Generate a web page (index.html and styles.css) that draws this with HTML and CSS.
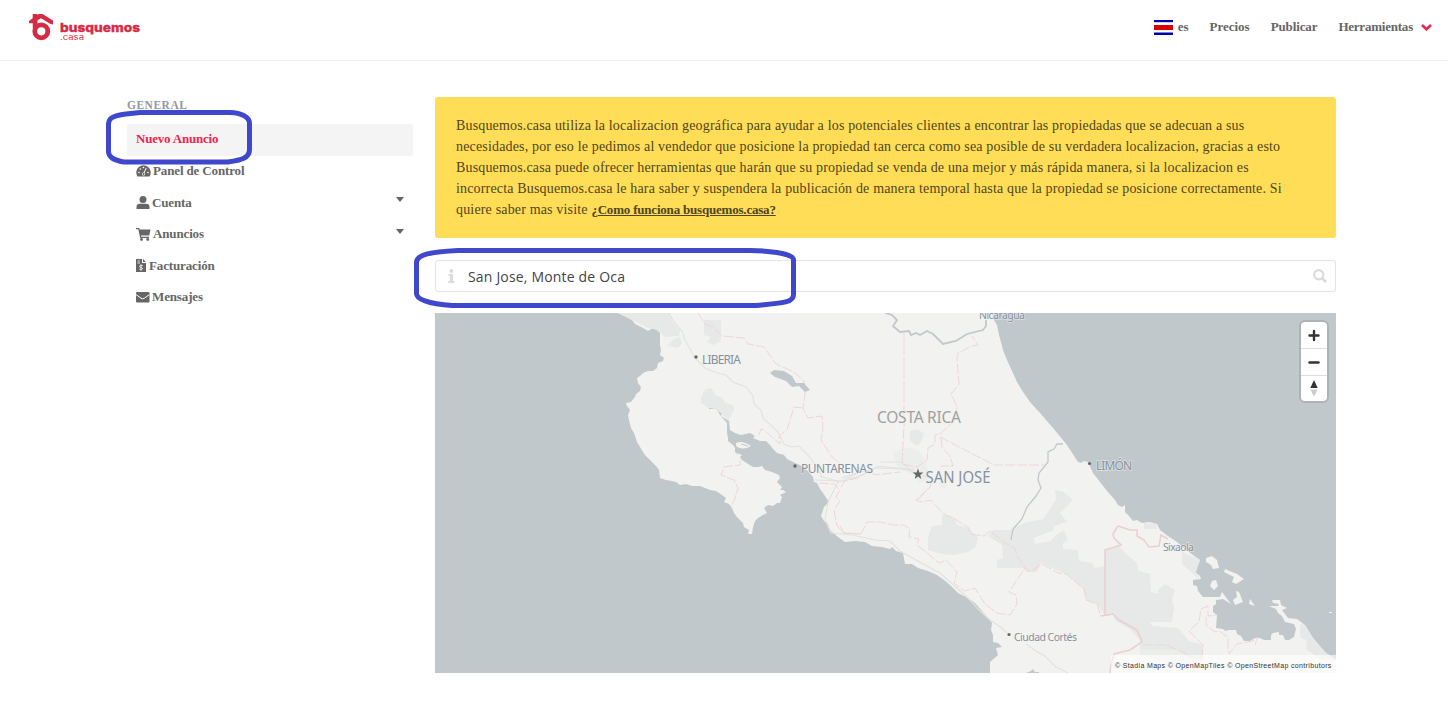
FILE: index.html
```html
<!DOCTYPE html>
<html lang="es">
<head>
<meta charset="utf-8">
<title>Busquemos.casa</title>
<link rel="stylesheet" href="styles.css">
</head>
<body>
<header class="navbar">
  <a class="brand">
    <svg width="114" height="32" viewBox="28 12 114 32">
      <path d="M29 21L32.700 18.200V14H37.500V15L39 14H42.500L53 20.500V24.600L50.500 24L41 18.300L32.500 23.200H29Z" fill="#d62b45"/>
      <path d="M32.500 20L37.500 17.500V26L33 31Z" fill="#d62b45"/>
      <circle cx="41.300" cy="31.300" r="6.500" fill="none" stroke="#d62b45" stroke-width="4.800"/>
      <text class="brand-name" x="60" y="32" textLength="80" lengthAdjust="spacingAndGlyphs">busquemos</text>
      <text class="brand-tld" x="60" y="40" textLength="24" lengthAdjust="spacingAndGlyphs">.casa</text>
    </svg>
  </a>
  <nav class="nav-links">
    <a class="lang"><span class="flag"></span>es</a>
    <a class="precios">Precios</a>
    <a class="publicar">Publicar</a>
    <a class="tools">Herramientas<svg width="11" height="7" viewBox="0 0 11 7"><path d="M1 1L5.500 5.300L10 1" fill="none" stroke="#f0254f" stroke-width="2.600"/></svg></a>
  </nav>
</header>
<div class="layout">
  <aside class="menu">
    <p class="menu-label">GENERAL</p>
    <a class="item active">Nuevo Anuncio</a>
    <a class="item"><svg width="15" height="12" viewBox="0 0 15 12"><path d="M1.500 11.500A7.200 7.200 0 1 1 13.500 11.500Z" fill="#666"/><g fill="#fff"><circle cx="3" cy="7.500" r=".8"/><circle cx="4.300" cy="4" r=".8"/><circle cx="7.500" cy="2.500" r=".8"/><circle cx="12" cy="7.500" r=".8"/><circle cx="7.500" cy="9" r="1.600"/></g><path d="M7.500 9L10.300 3" stroke="#fff" stroke-width="1"/><circle cx="7.500" cy="9" r="1" fill="#666"/></svg><span>Panel de Control</span></a>
    <a class="item"><svg width="14" height="13" viewBox="0 0 14 13"><circle cx="7" cy="3.500" r="3.500" fill="#666"/><path d="M.5 13V11Q.5 7.800 4 7.800H10Q13.500 7.800 13.500 11V13Z" fill="#666"/></svg><span>Cuenta</span><i class="caret"></i></a>
    <a class="item"><svg width="15" height="13" viewBox="0 0 15 13"><path d="M0 0H3.300L3.700 1.500H14.500L13.200 7.500H5L5.300 8.800H13V10H4.200L2.300 1.300H0Z" fill="#666"/><circle cx="5.500" cy="11.500" r="1.400" fill="#666"/><circle cx="11.700" cy="11.500" r="1.400" fill="#666"/></svg><span>Anuncios</span><i class="caret"></i></a>
    <a class="item"><svg width="11" height="13" viewBox="0 0 11 13"><path d="M0 0H6V4H10V13H0Z M7 0L10 3H7Z" fill="#666"/><path d="M1.500 2H4M1.500 4H4" stroke="#fff" stroke-width=".8"/><path d="M6.800 6.700Q3.500 5.600 3.500 7.400Q3.500 8.300 5 8.500T6.600 9.800Q6.300 11 3.300 10.200M5 5.300V11.800" stroke="#fff" stroke-width=".8" fill="none"/></svg><span>Facturación</span></a>
    <a class="item"><svg width="14" height="11" viewBox="0 0 14 11"><rect width="13.500" height="10.500" rx="1.200" fill="#666"/><path d="M0 2.500L5 6.200Q6.700 7.400 8.400 6.200L13.500 2.500" fill="none" stroke="#fff" stroke-width="1"/></svg><span>Mensajes</span></a>
  </aside>
  <main class="content">
    <div class="notice">
      <span class="line">Busquemos.casa utiliza la localizacion geográfica para ayudar a los potenciales clientes a encontrar las propiedadas que se adecuan a sus</span>
      <span class="line">necesidades, por eso le pedimos al vendedor que posicione la propiedad tan cerca como sea posible de su verdadera localizacion, gracias a esto</span>
      <span class="line">Busquemos.casa puede ofrecer herramientas que harán que su propiedad se venda de una mejor y más rápida manera, si la localizacion es</span>
      <span class="line">incorrecta Busquemos.casa le hara saber y suspendera la publicación de manera temporal hasta que la propiedad se posicione correctamente. Si</span>
      <span class="line">quiere saber mas visite <a>¿Como funciona busquemos.casa?</a></span>
    </div>
    <div class="search">
      <svg width="7" height="14" viewBox="0 0 7 14"><circle cx="3.300" cy="2" r="2" fill="#dbdbdb"/><path d="M.5 5H5V12H6.500V14H.3V12H1.800V7H.5Z" fill="#dbdbdb"/></svg>
      <span class="query">San Jose, Monte de Oca</span>
      <svg width="14" height="14" viewBox="0 0 14 14"><circle cx="5.700" cy="5.700" r="4.600" fill="none" stroke="#dbdbdb" stroke-width="2.200"/><path d="M9 9L13 13" stroke="#dbdbdb" stroke-width="2.600"/></svg>
    </div>
    <div class="map">
      <svg class="map-art" width="901" height="360" viewBox="435 313 901 360">
        <rect x="435" y="313" width="901" height="360" fill="#c1c8cb"/>
        <path class="land" d="M618 313L624 316 632 320 635 324 643 328 648 331 653 328 657 330 660 333 660 338 660 345 661 350 660 355 664 358 663 361 658 363 657 368 653 371 648 371 643 373 640 376 637 378 638 383 641 387 640 391 636 394 635 397 631 402 626 403 627 406 630 410 628 415 629 420 631 428 634 433 637 442 640 447 645 455 650 460 657 467 659 470 660 478 666 480 672 481 676 482 680 485 686 484 692 486 700 486 705 488 710 490 716 491 722 495 726 498 724 502 729 504 732 508 734 513 737 517 743 523 744 527 749 530 748 534 752 534 753 527 755 521 758 518 763 515 767 513 764 508 768 505 773 506 777 503 780 503 782 497 780 495 786 492 783 490 780 490 782 487 777 482 780 478 779 475 772 472 765 470 762 466 758 467 753 467 748 464 742 460 739 456 735 452 735 448 733 445 728 441 728 438 727 433 727 423 720 415 718 411 716 409 709 409 709 408 717 408 722 413 721 416 729 421 730 430 735 433 741 435 750 433 755 436 753 438 760 441 766 441 770 445 774 450 777 453 784 455 787 459 795 463 800 465 808 471 813 477 814 482 817 483 820 489 823 493 829 502 824 507 823 510 821 516 824 521 828 524 830 530 838 537 845 542 855 541 865 542 872 546 882 547 890 549 892 547 896 551 903 553 905 564 912 564 918 568 928 571 937 575 944 580 950 585 958 593 968 598 975 603 982 611 989 619 992 623 991 630 993 635 993 642 998 643 1002 647 996 648 998 655 990 662 990 673H1336V660L1325 652 1313 638 1305 625 1297 619 1288 618 1282 610 1287 608 1281 605 1280 600 1272 600 1273 603 1279 604 1278 606 1269 606 1276 609 1278 613 1282 616 1285 622 1294 624 1296 629 1294 637 1289 640 1285 640 1283 635 1279 635 1279 632 1273 633 1271 635 1271 640 1264 640 1260 638 1255 638 1250 641 1244 641 1241 636 1237 634 1236 630 1229 630 1225 631 1223 629 1216 628 1217 615 1213 612 1213 606 1216 604 1216 600 1223 599 1231 604 1225 596 1222 592 1220 597 1213 597 1210 597 1203 597 1198 591 1197 586 1193 585 1193 580 1201 579 1200 576 1195 572 1197 566 1200 560 1193 555 1185 549 1177 542 1168 536 1160 530 1157 524 1149 522 1142 523 1137 520 1133 521 1129 516 1125 512 1125 505 1122 507 1118 505 1115 500 1107 491 1100 482 1093 473 1088 462 1083 461 1082 463 1078 462 1067 445 1053 428 1040 413 1030 402 1023 392 1017 382 1012 371 1007 360 1003 350 1001 342 999 335 998 330 997 325 994 320 992 313Z"/>
        <path class="land" d="M1206 558L1212 556 1217 560 1219 568 1213 569 1211 565 1206 562ZM1212 581L1216 580 1218 586 1214 590 1210 586ZM1225 569L1232 572 1237 574 1244 579 1236 584 1232 582 1234 577 1224 572ZM1236 591L1239 592 1243 602 1235 605 1233 600 1237 597ZM1250 599L1255 606 1249 604ZM1329 612h3v1h-3Z"/>
        <path d="M736 443Q742 440 751 446Q742 451 736 446Z" class="land"/>
        <path d="M741 444L748 446" stroke="#c1c8cb" stroke-width="1"/>
        <path d="M737 453L742 455 739 458Z" class="land"/>
        <g fill="#e6e9e7">
          <path d="M619 313H670L672 322 680 331 679 336 665 337 658 330 648 328 632 320ZM704 320H721V341L713 345 707 342 711 337 704 335ZM665 331L680 331 679 335 665 337ZM667 346L674 339 680 337 682 343 678 348 670 346Z"/>
          <path d="M701 398L704 391 708 392 704 390 711 388 716 396 722 397 725 403 733 405 734 409 731 416 728 420 722 414 716 409 709 408 701 403Z"/>
          <path d="M910 431L918 429 924 434 921 442 917 446 910 441Z"/>
          <path d="M932 526L942 525 942 515 949 515 955 519 957 525 969 528 971 531 978 538 976 546 968 552 954 555 942 554 928 550 928 537Z"/>
          <path d="M988 536L992 530 1010 530 1024 523 1043 519 1052 506 1056 499 1055 490 1064 492 1073 500 1060 513 1067 522 1054 526 1054 530 1034 538 1035 544 1051 541 1056 535 1064 530 1068 540 1063 543 1063 549 1078 550 1079 561 1092 563 1095 568 1105 566 1105 616 1097 604 1086 600 1084 589 1066 574 1041 563 1037 572 1027 572 1022 568 997 568 997 560 1003 558 1002 545Z"/>
          <path d="M1105 549L1119 546 1127 555 1137 563 1138 571 1150 574 1151 592 1158 594 1158 590 1165 584 1175 590 1172 600 1174 608 1172 622 1150 622 1152 626 1178 628 1189 641 1203 645 1202 662 1190 658 1178 650 1140 649 1140 640 1130 629 1116 621 1112 614 1105 616Z"/>
          <path d="M1182 552L1200 560 1196 572 1200 580 1182 564ZM1144 523L1156 524 1157 529 1144 529ZM1300 624L1305 625 1313 638 1325 652 1336 660 1320 659 1306 649 1307 641 1300 637Z"/>
          <path d="M1140 649L1178 650 1200 658 1200 668H1163L1164 660 1140 655Z" opacity=".55"/>
          <path d="M893 452L905 448 915 449 922 454 926 464 930 478 920 483 913 474 898 469ZM939 482L947 484 945 489 939 486Z" opacity=".5"/>
        </g>
        <g class="road">
          <path d="M669 313L675 324 682 331 685 340 695 358 705 368 717 373 726 375 733 382 746 387 753 396 754 404 761 410 763 418 778 432 784 444 792 447 799 446 808 455 817 467 822 477 841 482 865 474 878 466 915 470M820 476L838 482 828 502 825 520 831 533 852 535 876 540 890 541 900 551 925 565 940 573 958 589 971 601 978 609 990 620 1002 628 1007 633M1026 644L1036 651 1045 656 1056 667 1068 673"/>
          <path d="M842 478L860 472 876 468 905 469 932 479M880 462H902L910 470 919 475M815 480L842 481 858 473"/>
        </g>
        <g class="border">
          <path d="M698 313L705 324 713 327 722 336 744 338 748 344 764 347 776 364 794 372 804 381 805 394 803 408 808 418 822 416 823 430 821 440 832 457 840 463M803 408L794 407 787 430 779 436 780 444 764 430 761 429 758 437M740 460V465L724 467 721 475 734 480 738 488 735 498 731 508M819 483L834 484 840 490 836 497 840 501 834 510 837 526 844 533 860 534"/>
          <path d="M904 333V425L902 464 917 467 927 460 928 448 935 444 935 435 940 434 955 420 957 406 951 394 959 384 957 359 958 353 972 346 978 345 972 336"/>
          <path d="M940 437L994 465H1044M941 438L942 447 950 456 953 466 940 466"/>
          <path d="M841 487L845 481 858 478 869 471 875 475 900 472M919 499L925 492 930 487 932 480M927 490L916 500 921 502 931 500 940 510 947 516 955 519 969 528 971 534 984 536 990 531 1005 543 1015 548 1017 556 1025 568 1030 572 1042 564 1058 573 1066 574 1084 589 1086 600 1097 604 1101 616 1113 614 1119 620 1137 630 1142 642M840 526L844 533 861 534 867 522 881 522 893 525 904 525 910 529 909 537 919 539 917 545 927 553 939 563 946 560 957 572 954 583 964 591 975 588 985 604 997 613 1010 615 1017 604 1016 595 1009 592 1025 568"/>
          <path d="M1202 659L1203 645 1189 631 1199 622 1201 609 1208 606 1208 616 1216 615M1206 617V625L1215 632 1219 631 1228 637 1228 647 1229 654 1237 644 1253 641 1257 637 1255 646M1143 645L1166 645 1178 650 1190 656 1202 659"/>
          <path class="strong" d="M1105 616V550L1121 545 1114 538 1113 534 1118 526 1130 530 1137 530 1137 536 1144 540 1149 547 1159 546 1161 535 1168 539M1101 616L1113 614 1119 620 1137 630 1142 642 1130 650 1114 654 1111 665 1110 673"/>
        </g>
        <path class="river" d="M885 313L892 315 897 320 893 326 900 332 909 331 911 335 916 333 920 335 927 331 933 334 943 344 956 341 967 334 983 330 986 326 986 320"/>
        <path class="river minor" d="M1063 444L1057 444 1054 449 1048 452 1048 462 1039 473 1038 480 1041 488 1036 496 1027 507 1022 519 1013 529 1011 540"/>
        <path fill="#c1c8cb" d="M770 373L774 370 784 371 792 376 796 383 804 383 810 390 805 392 799 386 792 387 786 381 775 377ZM1026 673L1031 671 1033 669 1035 672 1039 672V673Z"/>
        <g fill="#666"><circle cx="696" cy="357" r="1.700"/><circle cx="795" cy="466" r="1.700"/><circle cx="1089.500" cy="463.500" r="1.600"/><circle cx="1009" cy="634.500" r="1.600"/><path d="M918 468.500L919.400 472.400H923.400L920.200 474.900L921.300 479L918 476.600L914.700 479L915.800 474.900L912.600 472.400H916.600Z"/></g>
        <g class="labels">
          <text x="702" y="364" font-size="12" textLength="39">LIBERIA</text>
          <text x="801" y="473" font-size="12" textLength="72">PUNTARENAS</text>
          <text x="925.500" y="482.500" font-size="15.500" textLength="65" lengthAdjust="spacingAndGlyphs">SAN JOSÉ</text>
          <text x="1096" y="470" font-size="12" textLength="36">LIMÓN</text>
          <text x="877" y="423" font-size="15.500" textLength="84" class="country">COSTA RICA</text>
          <text x="979" y="318.500" font-size="10.500" textLength="46">Nicaragua</text>
          <text x="1163" y="550.500" font-size="10.500" textLength="31">Sixaola</text>
          <text x="1014" y="641" font-size="10.500" textLength="63">Ciudad Cortés</text>
        </g>
      </svg>
      <div class="controls">
        <svg viewBox="0 0 26 26"><path d="M13 9V18M8.500 13.500H17.500" stroke="#333" stroke-width="2.400" stroke-linecap="round"/></svg>
        <svg viewBox="0 0 26 26"><path d="M8.500 13.500H17.500" stroke="#333" stroke-width="2.400" stroke-linecap="round"/></svg>
        <svg viewBox="0 0 26 26"><path d="M13 4L16.700 12H9.300Z" fill="#333"/><path d="M9.300 13.500H16.700L13 20.500Z" fill="#ccc"/></svg>
      </div>
      <div class="attribution">© Stadia Maps © OpenMapTiles © OpenStreetMap contributors</div>
    </div>
  </main>
</div>
<svg class="marks" width="1448" height="701" viewBox="0 0 1448 701">
  <path d="M126 114C112 116 108 118 108.500 126V150C108 157 113 160 124 162H228C242 160 249 158 249.500 150V124C250 116 240 113 230 112.500H140Z"/>
  <path d="M458 250.500C432 252 416 254 416.500 263V293C416 299 428 304 452 305.500H756C782 303 794 303 793.500 294V260C794 254 774 251 750 250.500Z"/>
</svg>
</body>
</html>
```

FILE: styles.css
```css
* { box-sizing: border-box; }
body { margin: 0; width: 1448px; height: 701px; overflow: hidden; background: #fff; color: #666; font-family: "Liberation Serif", serif; font-size: 13px; }
svg { display: block; flex: none; }
.navbar { display: flex; justify-content: space-between; height: 61px; padding: 12px 16px 0 28px; border-bottom: 1px solid #f1f1f1; }
.brand-name { font: 800 12px Inter, sans-serif; fill: #d62b45; stroke: #d62b45; stroke-width: .3; }
.brand-tld { font: 400 7.5px Inter, sans-serif; fill: #d62b45; }
.nav-links { display: flex; height: 30px; align-items: center; gap: 21px; font-weight: 700; }
.nav-links a { display: flex; align-items: center; white-space: nowrap; }
.lang { gap: 5px; }
.flag { width: 19px; height: 15px; background: linear-gradient(#0000b0 0 2px, #ccccef 2px 3px, #fff 3px 5px, #d80000 5px 10px, #fff 10px 12px, #8080d7 12px 13px, #0000b0 13px); }
.publicar { letter-spacing: -.12px; }
.tools { gap: 8px; letter-spacing: -.22px; }
.layout { display: flex; gap: 22px; padding: 36px 112px 0 127px; }
.menu { width: 286px; flex: none; font-weight: 700; letter-spacing: -.14px; }
.menu-label { margin: 0; height: 27px; font-size: 11.5px; line-height: 16px; letter-spacing: .5px; color: #8f999f; }
.item { display: flex; height: 31.6px; align-items: center; gap: 2px; padding: 0 9px 1.6px; }
.active { height: 32px; padding-bottom: 2px; background: #f4f4f4; border-radius: 2px; color: #f0254f; letter-spacing: -.2px; }
.caret { margin: -6px 0 0 auto; border: 4px solid transparent; border-top: 5px solid #666; border-bottom: 0; }
.content { width: 901px; }
.notice { height: 141px; padding: 18px 21px; border-radius: 3px; background: #ffdd57; color: #4f451d; font-size: 14px; line-height: 21px; letter-spacing: .165px; }
.line { display: block; white-space: nowrap; }
.notice a { font-size: 13px; font-weight: 700; letter-spacing: -.2px; text-decoration: underline; }
.search { display: flex; align-items: center; height: 32px; margin: 22px 0 21px; padding: 0 8px 0 12px; border: 1px solid #e4e4e4; border-radius: 3px; }
.query { margin: 0 auto 0 13px; font: 14px "Open Sans", sans-serif; letter-spacing: .18px; color: #444; }
.map { position: relative; height: 360px; overflow: hidden; }
.land { fill: #f2f3f0; }
.road { fill: none; stroke: #e1e2e0; stroke-width: 1.1; }
.border { fill: none; stroke: #efd5d8; stroke-width: 1; stroke-dasharray: 10 2; }
.strong { stroke-width: 1.6; stroke-dasharray: none; stroke: #eccfd2; }
.river { fill: none; stroke: #c1c8cb; stroke-width: 1.8; }
.minor { stroke-width: 1.3; }
.labels { font-family: "Noto Sans", sans-serif; fill: #8690a0; paint-order: stroke; stroke: rgba(242,243,240,.6); stroke-width: 1.5; }
.country { fill: #a0a0a0; }
.controls { position: absolute; top: 9px; right: 9px; width: 26px; height: 79px; border-radius: 4px; background: #fff; box-shadow: 0 0 0 2px rgba(0,0,0,.1); }
.controls svg { width: 26px; height: 26px; }
.controls svg + svg { height: 27px; border-top: 1px solid #ddd; }
.attribution { position: absolute; right: 0; bottom: 0; width: 225px; height: 18px; padding-left: 4px; background: rgba(255,255,255,.6); color: #333; font: 7px/21px "Liberation Sans", sans-serif; letter-spacing: .34px; white-space: nowrap; }
.marks { position: absolute; top: 0; left: 0; fill: none; stroke: #3f48cc; stroke-width: 5; pointer-events: none; }
```
